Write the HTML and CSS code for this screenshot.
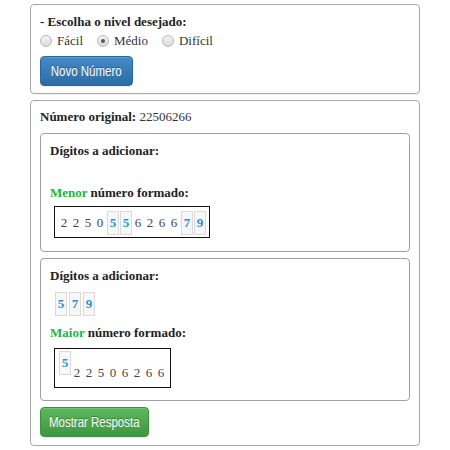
FILE: index.html
```html
<!DOCTYPE html>
<html>
<head>
<meta charset="utf-8">
<link rel="stylesheet" href="styles.css">
</head>
<body>
<div class="wrap">
  <div class="panel p1">
    <div class="title">- Escolha o nivel desejado:</div>
    <div class="radios">
      <label><input type="radio" name="n">Fácil</label>
      <label><input type="radio" name="n" checked>Médio</label>
      <label><input type="radio" name="n">Difícil</label>
    </div>
    <button class="btn blue"><span>Novo Número</span></button>
  </div>
  <div class="panel p2">
    <div class="orig"><b>Número original:</b> 22506266</div>
    <div class="box b1">
      <div class="lbl">Dígitos a adicionar:</div>
      <div class="spacer"></div>
      <div class="lbl"><span class="green">Menor</span> número formado:</div>
      <div class="result r1"><span class="d">2</span><span class="d">2</span><span class="d">5</span><span class="d">0</span><span class="a">5</span><span class="a">5</span><span class="d">6</span><span class="d">2</span><span class="d">6</span><span class="d">6</span><span class="a">7</span><span class="a">9</span></div>
    </div>
    <div class="box b2">
      <div class="lbl">Dígitos a adicionar:</div>
      <div class="digits"><span class="a">5</span><span class="a">7</span><span class="a">9</span></div>
      <div class="lbl lbl2"><span class="green">Maior</span> número formado:</div>
      <div class="result r2"><span class="a">5</span><span class="d">2</span><span class="d">2</span><span class="d">5</span><span class="d">0</span><span class="d">6</span><span class="d">2</span><span class="d">6</span><span class="d">6</span></div>
    </div>
    <button class="btn green-btn"><span>Mostrar Resposta</span></button>
  </div>
</div>
</body>
</html>
```
FILE: styles.css
```css
html, body {
  margin: 0;
  padding: 0;
  background: #fff;
}
body {
  font-family: "Liberation Serif", "DejaVu Serif", serif;
  font-size: 13px;
  color: #333;
}
.wrap {
  width: 390px;
  margin: 4px auto 0;
}
.panel {
  border: 1px solid #a8a8a8;
  border-radius: 4px;
  padding: 8px 9px 8px;
  box-shadow: 0 1px 1px rgba(0,0,0,.06);
}
.p1 {
  padding-bottom: 7px;
}
.p2 {
  margin-top: 6px;
  padding-top: 7px;
}
.title {
  font-weight: bold;
  line-height: 18px;
  color: #222;
}
.radios {
  line-height: 18px;
  margin-top: 1px;
  display: flex;
  align-items: center;
}
.radios label {
  display: flex;
  align-items: center;
  margin-right: 14px;
}
.radios input {
  appearance: none;
  -webkit-appearance: none;
  width: 12px;
  height: 12px;
  margin: 0 5px 0 0;
  border: 1px solid #b8b8b8;
  border-radius: 50%;
  background: linear-gradient(#f4f4f4, #d9d9d9);
  position: relative;
}
.radios input:checked::after {
  content: "";
  position: absolute;
  left: 3px;
  top: 3px;
  width: 4px;
  height: 4px;
  border-radius: 50%;
  background: #555;
}
.btn {
  font-family: "Liberation Sans", "Arial", sans-serif;
  font-size: 14px;
  color: #fff;
  border: 1px solid;
  border-radius: 4px;
  padding: 0;
  height: 30px;
  display: flex;
  align-items: center;
  justify-content: center;
  white-space: nowrap;
  text-shadow: 0 -1px 0 rgba(0,0,0,.3);
  box-shadow: inset 0 1px 0 rgba(255,255,255,.15), 0 1px 1px rgba(0,0,0,.075);
}
.btn span {
  display: inline-block;
  transform: scaleX(0.82);
}
.blue {
  background: linear-gradient(#428bca, #2d6ca2);
  border-color: #2b669a;
  width: 93px;
  margin-top: 6px;
}
.green-btn {
  background: linear-gradient(#5cb85c, #419641);
  border-color: #3e8f3e;
  width: 109px;
  margin-top: 6px;
}
.orig {
  line-height: 18px;
}
.orig b { color: #222; }
.box {
  border: 1px solid #a0a0a0;
  border-radius: 4px;
  padding: 8px 9px 13px;
}
.b1 { margin-top: 7px; }
.b2 { margin-top: 6px; padding-bottom: 12px; }
.lbl {
  font-weight: bold;
  line-height: 18px;
  color: #222;
}
.lbl2 { margin-top: 8px; }
.green { color: #1db53c; }
.spacer { height: 24px; }
.digits {
  display: flex;
  gap: 2px;
  margin: 7px 0 0 5px;
  height: 24px;
}
.result {
  display: inline-flex;
  box-sizing: border-box;
  border: 1px solid #111;
  margin-left: 4px;
  padding: 0 3px;
}
.r1 {
  margin-top: 4px;
  height: 32px;
  align-items: baseline;
  padding-top: 4px;
}
.r2 {
  margin-top: 6px;
  height: 40px;
  align-items: flex-start;
  padding-top: 2px;
}
.d {
  display: inline-block;
  width: 12px;
  text-align: center;
  color: #444;
  line-height: 16px;
}
.r2 .d {
  margin-top: 14px;
}
.a {
  display: inline-block;
  box-sizing: border-box;
  width: 12px;
  height: 24px;
  margin-left: 1px;
  text-align: center;
  font-weight: bold;
  color: #2b90d0;
  background: #f7f7f7;
  border: 1px solid #dadada;
  line-height: 22px;
}
.digits .a { margin-left: 0; }
```
